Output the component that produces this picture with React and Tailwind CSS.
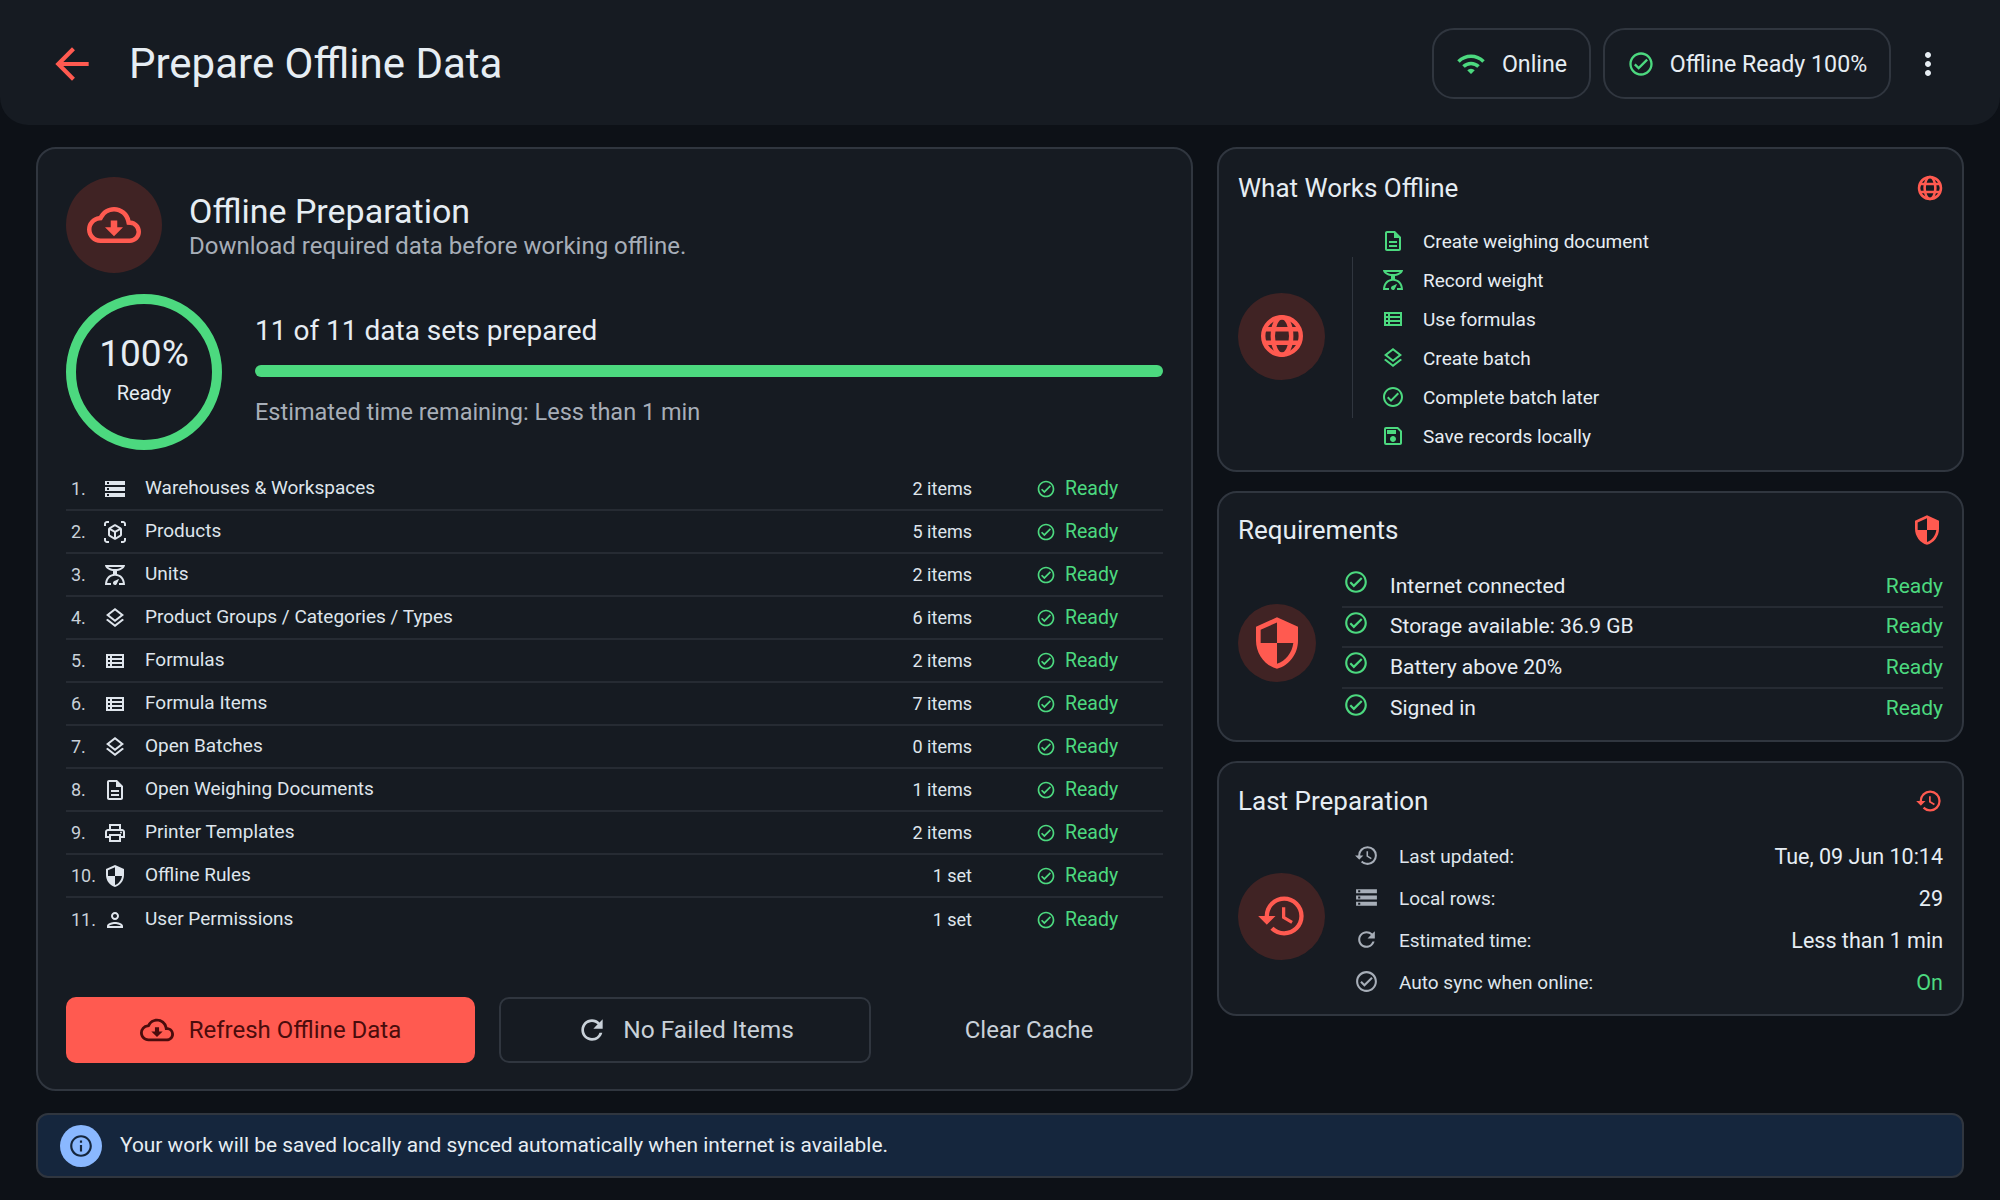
import React from 'react';
import {
  MdArrowBack, MdWifi, MdOutlineCheckCircle, MdMoreVert, MdOutlineCloudDownload, MdStorage,
  MdOutlineViewInAr, MdOutlineScale, MdOutlineLayers, MdOutlineViewList, MdOutlineDescription,
  MdOutlinePrint, MdSecurity, MdOutlinePerson, MdOutlineSave, MdHistory, MdRefresh, MdInfoOutline,
} from 'react-icons/md';

// Thick grid globe, heavier than the stock language icon
const Globe = ({ className }) => (
  <svg viewBox="0 0 24 24" fill="none" stroke="currentColor" strokeWidth="2.2" className={className}>
    <circle cx="12" cy="12" r="9.400" />
    <ellipse cx="12" cy="12" rx="4.600" ry="9.400" />
    <path d="M3.400 8.600h17.200M3.400 15.400h17.200" />
  </svg>
);

const rows = [
  ['1.', MdStorage, 'Warehouses & Workspaces', '2 items'],
  ['2.', MdOutlineViewInAr, 'Products', '5 items'],
  ['3.', MdOutlineScale, 'Units', '2 items'],
  ['4.', MdOutlineLayers, 'Product Groups / Categories / Types', '6 items'],
  ['5.', MdOutlineViewList, 'Formulas', '2 items'],
  ['6.', MdOutlineViewList, 'Formula Items', '7 items'],
  ['7.', MdOutlineLayers, 'Open Batches', '0 items'],
  ['8.', MdOutlineDescription, 'Open Weighing Documents', '1 items'],
  ['9.', MdOutlinePrint, 'Printer Templates', '2 items'],
  ['10.', MdSecurity, 'Offline Rules', '1 set'],
  ['11.', MdOutlinePerson, 'User Permissions', '1 set'],
];

const offlineItems = [
  [MdOutlineDescription, 'Create weighing document'],
  [MdOutlineScale, 'Record weight'],
  [MdOutlineViewList, 'Use formulas'],
  [MdOutlineLayers, 'Create batch'],
  [MdOutlineCheckCircle, 'Complete batch later'],
  [MdOutlineSave, 'Save records locally'],
];

const requirements = ['Internet connected', 'Storage available: 36.9 GB', 'Battery above 20%', 'Signed in'];

const lastPrep = [
  [MdHistory, 'Last updated:', 'Tue, 09 Jun 10:14'],
  [MdStorage, 'Local rows:', '29'],
  [MdRefresh, 'Estimated time:', 'Less than 1 min'],
  [MdOutlineCheckCircle, 'Auto sync when online:', 'On'],
];

const Card = ({ title, Icon, iconClass = 'h-[28px] w-[28px]', className, children }) => (
  <section className={`rounded-[20px] border-2 border-[#30363f] bg-[#161b22] px-[19px] ${className}`}>
    <div className="flex items-center justify-between">
      <h2 className="text-[26px] leading-[32px] text-[#e6edf3]">{title}</h2>
      <Icon className={`${iconClass} text-[#ff5a50]`} />
    </div>
    {children}
  </section>
);

export default function App() {
  return (
    <div className="flex h-[1200px] w-[2000px] flex-col bg-[#0d1117] font-['Roboto',sans-serif] text-[#e6edf3]">
      <header className="flex h-[125px] items-center rounded-b-[28px] bg-[#161b22] pl-[47px] pr-[54px] pt-[2px]">
        <MdArrowBack className="h-[50px] w-[50px] text-[#ff5a50]" />
        <h1 className="ml-[32px] flex-1 text-[42px] leading-[50px] text-[#e6edf3]">Prepare Offline Data</h1>
        <div className="flex h-[71px] w-[159px] items-center justify-center gap-[16px] rounded-[22px] border-2 border-[#30363f]">
          <MdWifi className="h-[30px] w-[30px] text-[#4cd97f]" />
          <span className="mt-[2px] text-[23.2px]">Online</span>
        </div>
        <div className="ml-[12px] flex h-[71px] w-[288px] items-center justify-center gap-[15px] rounded-[22px] border-2 border-[#30363f]">
          <MdOutlineCheckCircle className="h-[28px] w-[28px] text-[#4cd97f]" />
          <span className="mt-[2px] text-[23.2px]">Offline Ready 100%</span>
        </div>
        <MdMoreVert className="ml-[19px] h-[36px] w-[36px] text-[#e6edf3]" />
      </header>

      <main className="flex flex-1 flex-col gap-[22px] px-[36px] pb-[22px] pt-[22px]">
        <div className="flex flex-1 gap-[24px]">
          <section className="w-[1157px] rounded-[20px] border-2 border-[#30363f] bg-[#161b22] px-[28px] pt-[28px]">
            <div className="flex items-center gap-[27px]">
              <div className="flex h-[96px] w-[96px] items-center justify-center rounded-full bg-[#402324]">
                <MdOutlineCloudDownload className="h-[54px] w-[54px] text-[#ff5a50]" />
              </div>
              <div className="pt-[3px]">
                <h2 className="text-[34px] leading-[36px] text-[#e6edf3]">Offline Preparation</h2>
                <p className="mt-[2px] text-[24px] leading-[30px] text-[#a7aeb8]">Download required data before working offline.</p>
              </div>
            </div>

            <div className="mt-[21px] flex items-center gap-[33px]">
              <div className="flex h-[156px] w-[156px] flex-col items-center justify-center rounded-full border-[10px] border-[#4cd97f] pb-[7px]">
                <span className="text-[37px] leading-[44px]">100%</span>
                <span className="mt-[4px] text-[20px] leading-[26px]">Ready</span>
              </div>
              <div className="flex-1 pb-[5px]">
                <p className="text-[28px] leading-[36px]">11 of 11 data sets prepared</p>
                <div className="mt-[16px] h-[12px] rounded-full bg-[#4cd97f]" />
                <p className="mt-[20px] text-[23.5px] leading-[30px] text-[#a7aeb8]">Estimated time remaining: Less than 1 min</p>
              </div>
            </div>

            <ul className="mt-[18px]">
              {rows.map(([num, Icon, label, count]) => (
                <li key={num} className="flex h-[43px] items-center border-b-2 border-[#262b33] text-[19px] text-[#dfe5ec] last:border-b-0">
                  <span className="w-[35px] pl-[5px] text-[18px] text-[#c9d1d9]">{num}</span>
                  <Icon className="ml-[2px] h-[24px] w-[24px] shrink-0" />
                  <span className="ml-[18px] flex-1">{label}</span>
                  <span className="text-[18px]">{count}</span>
                  <div className="ml-[64px] flex w-[127px] items-center gap-[7px] text-[19.5px] text-[#4cd97f]">
                    <MdOutlineCheckCircle className="h-[20px] w-[20px] shrink-0" />
                    <span className="ml-[2px]">Ready</span>
                  </div>
                </li>
              ))}
            </ul>

            <div className="mt-[56px] flex items-center gap-[24px]">
              <button className="flex h-[66px] w-[409px] items-center justify-center gap-[15px] rounded-[10px] bg-[#ff5a50] text-[24px] text-[#4a0c0c]">
                <MdOutlineCloudDownload className="h-[34px] w-[34px]" />
                Refresh Offline Data
              </button>
              <button className="flex h-[66px] w-[372px] items-center justify-center gap-[15px] rounded-[10px] border-2 border-[#30363f] text-[24.5px] text-[#c9d1d9]">
                <MdRefresh className="h-[32px] w-[32px]" />
                No Failed Items
              </button>
              <button className="flex-1 text-[24px] text-[#c9d1d9]">Clear Cache</button>
            </div>
          </section>

          <div className="flex flex-1 flex-col gap-[19px]">
            <Card title="What Works Offline" Icon={Globe} iconClass="-mr-[1px] h-[28px] w-[28px]" className="h-[325px] pt-[23px]">
              <div className="mt-[19px] flex items-center">
                <div className="mb-[8px] flex h-[87px] w-[87px] items-center justify-center rounded-full bg-[#402324]">
                  <Globe className="h-[48px] w-[48px] text-[#ff5a50]" />
                </div>
                <div className="mb-[5px] ml-[27px] h-[161px] w-px bg-[#30363f]" />
                <ul className="ml-[28px]">
                  {offlineItems.map(([Icon, label]) => (
                    <li key={label} className="flex h-[39px] items-center gap-[18px] text-[19px]">
                      <Icon className="h-[24px] w-[24px] -translate-y-[2px] text-[#4cd97f]" />
                      {label}
                    </li>
                  ))}
                </ul>
              </div>
            </Card>

            <Card title="Requirements" Icon={MdSecurity} iconClass="h-[32px] w-[32px]" className="h-[251px] pt-[21px]">
              <div className="mt-[21px] flex items-center">
                <div className="mb-[10px] flex h-[78px] w-[78px] shrink-0 items-center justify-center rounded-full bg-[#402324]">
                  <MdSecurity className="h-[56px] w-[56px] text-[#ff5a50]" />
                </div>
                <ul className="ml-[26px] flex-1">
                  {requirements.map((label) => (
                    <li key={label} className="flex h-[40.5px] items-center border-b-2 border-[#262b33] text-[21px] last:border-b-0">
                      <MdOutlineCheckCircle className="ml-[1px] h-[26px] w-[26px] -translate-y-[4px] text-[#4cd97f]" />
                      <span className="ml-[21px] flex-1">{label}</span>
                      <span className="text-[#4cd97f]">Ready</span>
                    </li>
                  ))}
                </ul>
              </div>
            </Card>

            <Card title="Last Preparation" Icon={MdHistory} className="h-[255px] pt-[22px]">
              <div className="mt-[19px] flex items-center">
                <div className="mb-[8px] flex h-[87px] w-[87px] shrink-0 items-center justify-center rounded-full bg-[#402324]">
                  <MdHistory className="h-[52px] w-[52px] text-[#ff5a50]" />
                </div>
                <ul className="ml-[29px] flex-1">
                  {lastPrep.map(([Icon, label, value]) => (
                    <li key={label} className="flex h-[42px] items-center text-[19px]">
                      <Icon className="h-[25px] w-[25px] -translate-y-[2px] text-[#a7aeb8]" />
                      <span className="ml-[20px] flex-1 text-[#dfe5ec]">{label}</span>
                      <span className={`text-[21.5px] ${value === 'On' ? 'text-[#4cd97f]' : 'text-[#e6edf3]'}`}>{value}</span>
                    </li>
                  ))}
                </ul>
              </div>
            </Card>
          </div>
        </div>

        <div className="flex h-[65px] items-center gap-[18px] rounded-[12px] border-2 border-[#30363f] bg-[#15263d] pl-[22px]">
          <div className="flex h-[42px] w-[42px] items-center justify-center rounded-full bg-[#8ab8ff]">
            <MdInfoOutline className="h-[26px] w-[26px] text-[#15263d]" />
          </div>
          <p className="text-[20.9px] text-[#e6edf3]">Your work will be saved locally and synced automatically when internet is available.</p>
        </div>
      </main>
    </div>
  );
}
